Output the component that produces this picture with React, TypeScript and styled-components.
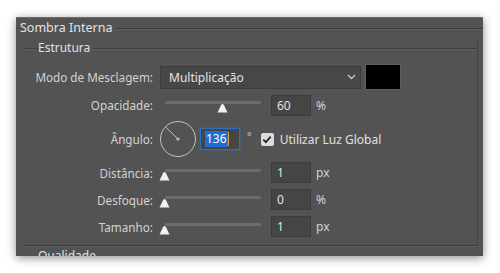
import styled, { createGlobalStyle } from 'styled-components';

const GlobalStyle = createGlobalStyle`
  html, body {
    margin: 0;
    background: #ffffff;
  }
  body {
    font-family: 'Noto Sans', 'Open Sans', sans-serif;
    font-size: 11.7px;
    color: #d6d6d6;
  }
`;

interface SliderRowData {
  label: string;
  value: number;
  max: number;
  unit: string;
}

const opacity: SliderRowData = { label: 'Opacidade:', value: 60, max: 100, unit: '%' };
const lowerRows: SliderRowData[] = [
  { label: 'Distância:', value: 1, max: 250, unit: 'px' },
  { label: 'Desfoque:', value: 0, max: 250, unit: '%' },
  { label: 'Tamanho:', value: 1, max: 250, unit: 'px' },
];

const Thumb = () => (
  <svg width="11" height="10" viewBox="0 0 11 10">
    <path d="M0.5 9.5 L4 2.2 Q5.5 -0.2 7 2.2 L10.5 9.5 Z" fill="#f2f2f2" />
  </svg>
);

const Slider = ({ value, max }: { value: number; max: number }) => (
  <SliderBox>
    <Track />
    <ThumbBox style={{ left: `${(value / max) * 100}%` }}>
      <Thumb />
    </ThumbBox>
  </SliderBox>
);

const ValueRow = ({ item, height }: { item: SliderRowData; height: number }) => (
  <Row $height={height}>
    <Label>{item.label}</Label>
    <Controls>
      <Slider value={item.value} max={item.max} />
      <NumberBox>{item.value}</NumberBox>
      <Unit>{item.unit}</Unit>
    </Controls>
  </Row>
);

const App = () => {
  return (
    <>
      <GlobalStyle />
      <Page>
        <Panel>
          <Legend $lead={4}>
            <LegendText $size={12.5}>Sombra Interna</LegendText>
          </Legend>
          <Structure>
            <Legend $lead={15}>
              <LegendText $size={12}>Estrutura</LegendText>
            </Legend>
            <Rows>
              <Row $height={28}>
                <Label>Modo de Mesclagem:</Label>
                <Controls>
                  <Select>
                    <span>Multiplicação</span>
                    <svg width="9" height="6" viewBox="0 0 9 6">
                      <path d="M1 1 L4.5 4.5 L8 1" stroke="#c8c8c8" strokeWidth="1.3" fill="none" />
                    </svg>
                  </Select>
                  <Swatch />
                </Controls>
              </Row>
              <ValueRow item={opacity} height={28} />
              <Row $height={40}>
                <Label>Ângulo:</Label>
                <Controls>
                  <Dial>
                    <svg width="38" height="38" viewBox="0 0 38 38">
                      <circle cx="19" cy="19" r="17.5" stroke="#c4c4c4" strokeWidth="1" fill="none" />
                      <line x1="19" y1="19" x2="6.6" y2="7" stroke="#c4c4c4" strokeWidth="1" />
                      <circle cx="19" cy="19" r="1.6" fill="#c4c4c4" />
                    </svg>
                  </Dial>
                  <AngleBox>
                    <Selected>136</Selected>
                    <Caret />
                  </AngleBox>
                  <Degree>°</Degree>
                  <Check>
                    <svg width="10" height="9" viewBox="0 0 10 9">
                      <path d="M1.3 4.6 L3.9 7.2 L8.7 1.6" stroke="#262626" strokeWidth="1.8" fill="none" />
                    </svg>
                  </Check>
                  <CheckLabel>Utilizar Luz Global</CheckLabel>
                </Controls>
              </Row>
              {lowerRows.map((item) => (
                <ValueRow key={item.label} item={item} height={27} />
              ))}
            </Rows>
          </Structure>
          <Legend $lead={22}>
            <LegendText $size={12}>Qualidade</LegendText>
          </Legend>
        </Panel>
      </Page>
    </>
  );
};
export default App;

const Page = styled.div`
  padding: 17px 0 0 16px;
  height: 273px;
  box-sizing: border-box;
`;
const Panel = styled.div`
  width: 467px;
  height: 239px;
  background: #535353;
  border-top: 1px solid #6c6c6c;
  box-sizing: border-box;
  overflow: hidden;
  box-shadow: 0 2px 9px rgba(0, 0, 0, 0.45);
  padding-top: 2px;
`;
const Legend = styled.div<{ $lead: number }>`
  display: flex;
  align-items: center;
  height: 16px;
  &::before,
  &::after {
    content: '';
    height: 1px;
    background: #3e3e3e;
    box-shadow: 0 1px 0 #5e5e5e;
  }
  &::before {
    width: ${({ $lead }) => $lead}px;
  }
  &::after {
    flex: 1;
    margin-left: 3px;
  }
`;
const LegendText = styled.span<{ $size: number }>`
  font-size: ${({ $size }) => $size}px;
  color: #e2e2e2;
  line-height: 16px;
`;
const Structure = styled.div`
  margin: 4px 5px 2px 7px;
  border-right: 1px solid #444;
  border-bottom: 1px solid #3e3e3e;
  box-shadow: 0 1px 0 #5e5e5e;
`;
const Rows = styled.div`
  display: flex;
  flex-direction: column;
  padding: 7px 0 5px;
`;
const Row = styled.div<{ $height: number }>`
  display: flex;
  align-items: center;
  height: ${({ $height }) => $height}px;
`;
const Label = styled.div`
  width: 130px;
  text-align: right;
  color: #d2d2d2;
  flex: 0 0 auto;
`;
const Controls = styled.div`
  display: flex;
  align-items: center;
  margin-left: 7px;
`;
const Select = styled.div`
  width: 201px;
  height: 23px;
  box-sizing: border-box;
  background: #474747;
  border: 1px solid #3c3c3c;
  display: flex;
  align-items: center;
  justify-content: space-between;
  padding: 0 4px 0 8px;
  color: #e4e4e4;
  font-size: 12px;
`;
const Swatch = styled.div`
  width: 36px;
  height: 26px;
  box-sizing: border-box;
  margin-left: 4px;
  background: #000;
  border: 1px solid #5f5f5f;
`;
const SliderBox = styled.div`
  position: relative;
  width: 96px;
  height: 14px;
  margin: 0 0 0 5px;
  transform: translateY(3px);
`;
const Track = styled.div`
  height: 3px;
  border-radius: 2px;
  background: #6d6d6d;
`;
const ThumbBox = styled.div`
  position: absolute;
  top: 2px;
  width: 11px;
  height: 10px;
  margin-left: -6px;
  display: flex;
`;
const NumberBox = styled.div`
  width: 40px;
  height: 21px;
  box-sizing: border-box;
  margin-left: 10px;
  padding-left: 5px;
  background: #454545;
  border: 1px solid #3c3c3c;
  display: flex;
  align-items: center;
  color: #e4e4e4;
  font-size: 12px;
`;
const Unit = styled.span`
  margin-left: 5px;
  color: #d2d2d2;
  font-size: 12px;
`;
const Dial = styled.div`
  width: 38px;
  height: 38px;
  margin-left: -1px;
  display: flex;
`;
const AngleBox = styled.div`
  width: 40px;
  height: 22px;
  box-sizing: border-box;
  margin-left: 3px;
  padding-left: 4px;
  background: #454545;
  border: 1px solid #2f6fc4;
  box-shadow: 0 0 0 1px rgba(47, 111, 196, 0.35);
  display: flex;
  align-items: center;
  font-size: 12px;
`;
const Selected = styled.span`
  background: #1f6ed4;
  color: #ffffff;
  line-height: 16px;
  padding: 0 1px;
`;
const Caret = styled.span`
  width: 1px;
  height: 14px;
  background: #e0a030;
`;
const Degree = styled.span`
  margin-left: 7px;
  color: #c8c8c8;
  align-self: flex-start;
  margin-top: 8px;
  font-size: 11px;
`;
const Check = styled.div`
  width: 13px;
  height: 13px;
  box-sizing: border-box;
  margin-left: 9px;
  border-radius: 2px;
  background: #dcdcdc;
  display: flex;
  align-items: center;
  justify-content: center;
`;
const CheckLabel = styled.span`
  margin-left: 6px;
  color: #e0e0e0;
  font-size: 12px;
`;
